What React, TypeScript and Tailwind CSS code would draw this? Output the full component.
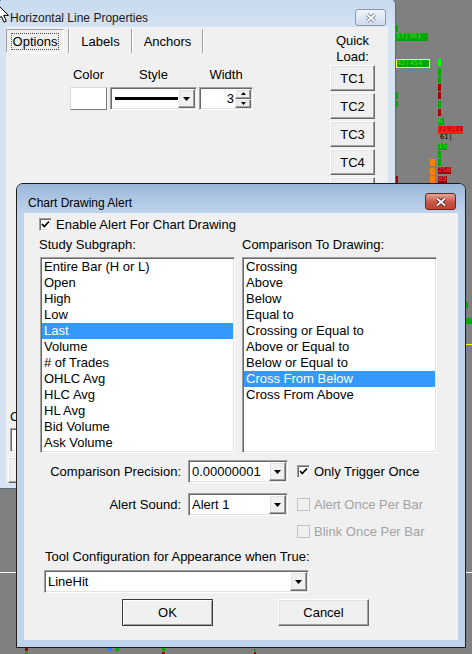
import type { ReactNode } from 'react';

// classic 3D edges
const sunken =
	'border border-t-[#a0a0a0] border-l-[#a0a0a0] border-r-white border-b-white shadow-[inset_1px_1px_0_#696969,inset_-1px_-1px_0_#e3e3e3]';
const raised =
	'border border-t-white border-l-white border-r-[#696969] border-b-[#696969] shadow-[inset_-1px_-1px_0_#a0a0a0,inset_1px_1px_0_#e3e3e3] bg-[#f0f0f0]';

const subgraphs = [
	'Entire Bar (H or L)',
	'Open',
	'High',
	'Low',
	'Last',
	'Volume',
	'# of Trades',
	'OHLC Avg',
	'HLC Avg',
	'HL Avg',
	'Bid Volume',
	'Ask Volume',
];

const comparisons = [
	'Crossing',
	'Above',
	'Below',
	'Equal to',
	'Crossing or Equal to',
	'Above or Equal to',
	'Below or Equal to',
	'Cross From Below',
	'Cross From Above',
];

// bits of the price chart peeking out around the dialogs
const marks: { cls: string; label?: string }[] = [
	{ cls: 'left-[396px] top-[25px] w-[2px] h-[7px] bg-[#00a800]' },
	{ cls: 'left-[396px] top-[33px] w-[32px] h-[8px] bg-[#00a800] text-[#52d152]', label: '57|361' },
	{ cls: 'left-[396px] top-[59px] w-[34px] h-[9px] bg-[#00a800] border border-[#ffff00] text-[#52d152]', label: '42|454' },
	{ cls: 'left-[396px] top-[92px] w-[2px] h-[7px] bg-[#00a800]' },
	{ cls: 'left-[396px] top-[101px] w-[2px] h-[6px] bg-[#00a800]' },
	{ cls: 'left-[396px] top-[176px] w-[2px] h-[7px] bg-[#a00000]' },
	{ cls: 'left-[438px] top-[59px] w-[3px] h-[7px] bg-[#00ff00]' },
	{ cls: 'left-[438px] top-[68px] w-[3px] h-[7px] bg-[#00a800]' },
	{ cls: 'left-[438px] top-[76px] w-[3px] h-[7px] bg-[#00a800]' },
	{ cls: 'left-[438px] top-[84px] w-[3px] h-[7px] bg-[#a00000]' },
	{ cls: 'left-[438px] top-[92px] w-[3px] h-[7px] bg-[#a00000]' },
	{ cls: 'left-[438px] top-[101px] w-[3px] h-[7px] bg-[#00a800]' },
	{ cls: 'left-[438px] top-[109px] w-[3px] h-[7px] bg-[#a00000]' },
	{ cls: 'left-[438px] top-[118px] w-[6px] h-[7px] bg-[#00a800] text-[#52d152]', label: '6' },
	{ cls: 'left-[438px] top-[126px] w-[25px] h-[8px] bg-[#ff1a1a] text-[#a00000]', label: '219|20' },
	{ cls: 'left-[440px] top-[134px] w-[14px] h-[9px] text-black', label: '61|' },
	{ cls: 'left-[438px] top-[143px] w-[9px] h-[7px] bg-[#00a800] text-[#52d152]', label: '15' },
	{ cls: 'left-[438px] top-[151px] w-[3px] h-[7px] bg-[#00a800]' },
	{ cls: 'left-[438px] top-[159px] w-[3px] h-[7px] bg-[#00a800]' },
	{ cls: 'left-[438px] top-[167px] w-[13px] h-[7px] bg-[#a00000] text-[#e05050]', label: '258' },
	{ cls: 'left-[438px] top-[176px] w-[9px] h-[8px] bg-[#a00000] text-[#e05050]', label: '89' },
	{ cls: 'left-[430px] top-[159px] w-[5px] h-[7px] bg-[#ff8000]' },
	{ cls: 'left-[430px] top-[168px] w-[5px] h-[7px] bg-[#ff8000]' },
	{ cls: 'left-[430px] top-[176px] w-[5px] h-[8px] bg-[#ff8000]' },
	{ cls: 'left-[466px] top-[302px] w-[2px] h-[6px] bg-[#00a800]' },
	{ cls: 'left-[466px] top-[318px] w-[6px] h-[6px] bg-[#00a800]' },
	{ cls: 'left-0 top-[344px] w-[472px] h-px bg-[#ffff00]' },
	{ cls: 'left-0 top-[572px] w-[472px] h-px bg-white' },
	{ cls: 'left-[25px] top-[648px] w-[3px] h-[3px] bg-[#a00000]' },
	{ cls: 'left-[25px] top-[652px] w-[3px] h-[2px] bg-[#00a800]' },
	{ cls: 'left-[108px] top-[648px] w-[4px] h-[3px] bg-[#2a7fff]' },
	{ cls: 'left-[116px] top-[648px] w-[3px] h-[3px] bg-[#00a800]' },
	{ cls: 'left-[162px] top-[648px] w-[3px] h-[3px] bg-[#00a800]' },
	{ cls: 'left-[162px] top-[652px] w-[3px] h-[2px] bg-[#a00000]' },
	{ cls: 'left-[254px] top-[649px] w-[2px] h-[2px] bg-[#00a800]' },
	{ cls: 'left-[254px] top-[652px] w-[2px] h-[2px] bg-[#a00000]' },
];

const DropArrow = () => (
	<svg width="7" height="4" viewBox="0 0 7 4">
		<path d="M0 0h7L3.5 4z" fill="#000" />
	</svg>
);

const SpinArrow = ({ up }: { up?: boolean }) => (
	<svg width="5" height="3" viewBox="0 0 5 3">
		<path d={up ? 'M0 3h5L2.5 0z' : 'M0 0h5L2.5 3z'} fill="#000" />
	</svg>
);

const Combo = ({ value, className }: { value: ReactNode; className: string }) => (
	<div className={`${sunken} ${className} bg-white flex p-px`}>
		<div className="flex-1 flex items-center pl-[2px] overflow-hidden whitespace-nowrap">{value}</div>
		<div className={`${raised} w-[17px] flex items-center justify-center`}>
			<DropArrow />
		</div>
	</div>
);

const Check = ({ checked, disabled }: { checked?: boolean; disabled?: boolean }) => (
	<span
		className={`w-[13px] h-[13px] shrink-0 flex items-center justify-center ${
			disabled ? 'border border-[#c4c4c4] bg-[#f0f0f0]' : `${sunken} bg-white`
		}`}
	>
		{checked && (
			<svg width="11" height="11" viewBox="0 0 11 11">
				<polyline points="2,5 4.3,7.5 9,2.5" fill="none" stroke="#000" strokeWidth="1.8" />
			</svg>
		)}
	</span>
);

const ListBox = ({ items, selected }: { items: string[]; selected: number }) => (
	<div className={`${sunken} bg-white h-[196px] p-px overflow-hidden`}>
		{items.map((t, i) => (
			<div
				key={t}
				className={`h-4 leading-4 pl-[2px] whitespace-nowrap ${i === selected ? 'bg-[#3399ff] text-white' : ''}`}
			>
				{t}
			</div>
		))}
	</div>
);

const CloseBtn = ({ active, className }: { active?: boolean; className: string }) => (
	<div
		className={`${className} w-[31px] h-[17px] rounded-[3px] border flex items-center justify-center ${
			active
				? 'border-[#6b2620] bg-gradient-to-b from-[#e4a596] via-[#c85a4a] to-[#c2402f]'
				: 'border-[#8a99b0] bg-gradient-to-b from-[#eef3f9] to-[#d0dcec]'
		}`}
	>
		<svg width="12" height="10" viewBox="0 0 12 10">
			<path d="M2 1.5L10 8.5M10 1.5L2 8.5" stroke={active ? '#4a1510' : '#6c7a8e'} strokeWidth="3.6" />
			<path d="M2 1.5L10 8.5M10 1.5L2 8.5" stroke="#fff" strokeWidth="1.8" />
		</svg>
	</div>
);

const Btn = ({ children, className, primary }: { children?: ReactNode; className: string; primary?: boolean }) => (
	<div
		className={`${className} flex items-center justify-center ${
			primary
				? 'border border-[#3a3a3a] bg-[#f0f0f0] shadow-[inset_1px_1px_0_#fff,inset_-1px_-1px_0_#a0a0a0]'
				: raised
		}`}
	>
		{children}
	</div>
);

const Sep = () => <div className="w-[2px] self-stretch border-l border-[#a0a0a0] bg-white" />;

const PropertiesWindow = () => (
	<div className="absolute left-[-2px] top-[-2px] w-[398px] h-[491px] rounded-t-[7px] border border-[#5b6c82] bg-[#d5e3f2] flex flex-col">
		<div className="h-[28px] shrink-0 flex items-start rounded-t-[6px] bg-gradient-to-b from-[#c7d9ee] to-[#d5e3f2]">
			<span className="mt-[12px] ml-[11px] text-[12px] leading-[14px] text-[#1a1a1a]">Horizontal Line Properties</span>
			<CloseBtn className="ml-auto mt-[10px] mr-[9px]" />
		</div>
		<div className="mx-[7px] h-[456px] bg-[#f0f0f0] flex">
			<div className="flex-1 flex flex-col">
				<div className="mt-[2px] h-[24px] flex">
					<div className="w-[58px] flex items-center justify-center border border-t-[#a0a0a0] border-l-[#a0a0a0] border-r-white border-b-white bg-[repeating-conic-gradient(#e4e4e4_0_25%,#fbfbfb_0_50%)] bg-[length:2px_2px]">
						<span className="px-px outline outline-1 outline-dotted outline-[#555]">Options</span>
					</div>
					<div className="w-[4px]" />
					<Sep />
					<div className="w-[61px] flex items-center justify-center">Labels</div>
					<Sep />
					<div className="w-[69px] flex items-center justify-center">Anchors</div>
					<Sep />
				</div>
				<div className="ml-[64px] mt-[14px] flex items-start">
					<div className="w-[37px] flex flex-col items-center">
						<span>Color</span>
						<div className="mt-[5px] w-[37px] h-[23px] bg-white border border-t-[#dcdcdc] border-l-[#dcdcdc] border-r-[#7a7a7a] border-b-[#7a7a7a]" />
					</div>
					<div className="ml-[3px] w-[87px] flex flex-col items-center">
						<span>Style</span>
						<Combo
							className="mt-[5px] w-[87px] h-[23px]"
							value={<div className="ml-px w-[67px] h-[3px] bg-black" />}
						/>
					</div>
					<div className="ml-[2px] w-[54px] flex flex-col items-center">
						<span>Width</span>
						<div className={`${sunken} mt-[5px] w-[54px] h-[23px] bg-white flex p-px`}>
							<div className="flex-1 flex items-center justify-end pr-px">3</div>
							<div className="w-[16px] flex flex-col">
								<div className={`${raised} flex-1 flex items-center justify-center`}>
									<SpinArrow up />
								</div>
								<div className={`${raised} flex-1 flex items-center justify-center`}>
									<SpinArrow />
								</div>
							</div>
						</div>
					</div>
				</div>
				{/* lower part of the tab page, mostly under the alert dialog */}
				<span className="ml-[4px] mt-[299px] self-start">C</span>
				<div className={`${sunken} ml-[4px] mt-[4px] w-[200px] h-[24px] bg-white`} />
				<Btn className="ml-[2px] mt-[5px] w-[80px] h-[26px]" />
			</div>
			<div className="w-[45px] mr-[13px] flex flex-col items-center">
				<div className="pt-[6px] leading-[16px] text-center">
					Quick
					<br />
					Load:
				</div>
				<div className="flex flex-col gap-[2px]">
					{['TC1', 'TC2', 'TC3', 'TC4', 'TC5', 'TC6'].map((tc) => (
						<Btn key={tc} className="w-[45px] h-[26px]">
							{tc}
						</Btn>
					))}
				</div>
			</div>
		</div>
	</div>
);

const AlertWindow = () => (
	<div className="absolute left-[16px] top-[183px] w-[450px] h-[465px] rounded-t-[7px] border border-[#1c1c1c] bg-[#bfd4ec] flex flex-col">
		<div className="h-[29px] shrink-0 flex items-start rounded-t-[6px] bg-gradient-to-b from-[#9bb7da] to-[#bfd4ec]">
			<span className="mt-[12px] ml-[11px] text-[12px] leading-[14px]">Chart Drawing Alert</span>
			<CloseBtn active className="ml-auto mt-[9px] mr-[9px]" />
		</div>
		<div className="mx-[7px] h-[427px] bg-[#f0f0f0] pl-[15px] pt-[5px] flex flex-col">
			<label className="h-[13px] flex items-center gap-[4px]">
				<Check checked />
				Enable Alert For Chart Drawing
			</label>

			<div className="mt-[6px] flex">
				<div className="w-[197px] flex flex-col">
					<span>Study Subgraph:</span>
					<div className="ml-px mt-[5px] w-[195px]">
						<ListBox items={subgraphs} selected={4} />
					</div>
				</div>
				<div className="ml-[6px] w-[195px] flex flex-col">
					<span>Comparison To Drawing:</span>
					<div className="mt-[5px]">
						<ListBox items={comparisons} selected={7} />
					</div>
				</div>
			</div>

			<div className="mt-[7px] h-[23px] flex items-center">
				<span className="w-[142px] text-right">Comparison Precision:</span>
				<Combo className="ml-[7px] w-[100px] h-full" value="0.00000001" />
				<label className="ml-[9px] flex items-center gap-[4px]">
					<Check checked />
					Only Trigger Once
				</label>
			</div>
			<div className="mt-[10px] h-[23px] flex items-center">
				<span className="w-[142px] text-right">Alert Sound:</span>
				<Combo className="ml-[7px] w-[100px] h-full" value="Alert 1" />
				<label className="ml-[9px] flex items-center gap-[4px] text-[#a3a3a3]">
					<Check disabled />
					Alert Once Per Bar
				</label>
			</div>
			<label className="mt-[9px] ml-[258px] h-[13px] flex items-center gap-[4px] text-[#a3a3a3]">
				<Check disabled />
				Blink Once Per Bar
			</label>

			<span className="mt-[11px] pl-[6px]">Tool Configuration for Appearance when True:</span>
			<Combo className="mt-[6px] ml-[5px] w-[265px] h-[23px]" value="LineHit" />

			<div className="mt-[6px] flex">
				<Btn primary className="ml-[83px] w-[91px] h-[27px]">
					OK
				</Btn>
				<Btn className="ml-[65px] w-[91px] h-[27px]">Cancel</Btn>
			</div>
		</div>
	</div>
);

export default function App() {
	return (
		<div className="relative w-[472px] h-[654px] overflow-hidden bg-[#808080] font-['Liberation_Sans',Arial,sans-serif] text-[13px] leading-[15px] text-black select-none">
			{marks.map((m, i) => (
				<div
					key={i}
					className={`absolute ${m.cls} overflow-hidden text-[7px] leading-[7px] font-['DejaVu_Sans_Mono',monospace] whitespace-nowrap`}
				>
					{m.label}
				</div>
			))}
			<PropertiesWindow />
			<AlertWindow />
			<svg className="absolute left-[-3px] top-[4px]" width="12" height="19" viewBox="0 0 12 19">
				<path
					d="M0.5 0.5V16L4.3 12.3L7 18.2L9.3 17.2L6.7 11.4H11.5Z"
					fill="#fff"
					stroke="#000"
					strokeWidth="1"
				/>
			</svg>
		</div>
	);
}
